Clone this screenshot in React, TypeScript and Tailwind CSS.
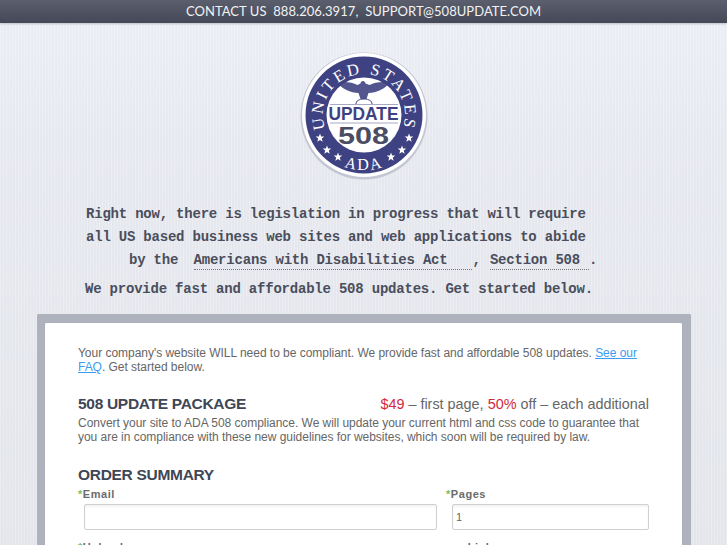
import React from 'react';

const NAVY = '#3f4282';

const starPoints = (cx: number, cy: number, r: number) => {
  const pts: string[] = [];
  for (let i = 0; i < 10; i++) {
    const rad = i % 2 === 0 ? r : r * 0.42;
    const a = (Math.PI / 5) * i - Math.PI / 2;
    pts.push(`${cx + rad * Math.cos(a)},${cy + rad * Math.sin(a)}`);
  }
  return pts.join(' ');
};

const STARS: [number, number][] = [
  [21, 88], [28, 100], [39, 107], [92, 107], [103, 100], [110, 88],
];

const Seal = () => (
  <svg width="130" height="130" viewBox="0 0 130 130" className="block">
    <defs>
      <path id="sealTop" d="M 33.6 91.400 A 41 41 0 1 1 96.400 91.400" />
      <path id="sealBottom" d="M 20 97 A 55 55 0 0 0 110 97" />
    </defs>
    <circle cx="65" cy="66" r="63.5" fill="#c4c6d3" />
    <circle cx="65" cy="65" r="62" fill="#ffffff" />
    <circle cx="65" cy="65" r="58.5" fill={NAVY} />
    <circle cx="65" cy="65" r="37.5" fill="#ffffff" />
    <text fontFamily="'Liberation Serif', serif" fontSize="16.5" fill="#ffffff" letterSpacing="2.6" textAnchor="middle">
      <textPath href="#sealTop" startOffset="50%">UNITED STATES</textPath>
    </text>
    <text fontFamily="'Liberation Serif', serif" fontSize="16" fill="#ffffff" letterSpacing="2" textAnchor="middle">
      <textPath href="#sealBottom" startOffset="50%">ADA</textPath>
    </text>
    {STARS.map(([x, y]) => (
      <polygon key={x} points={starPoints(x, y, 4.5)} fill="#ffffff" />
    ))}
    {/* eagle */}
    <path d="M64 31c-1.500 0-2.500 1-2.500 2.500l-3 1.500c-5-2.500-12-4-20-2.500 2 3 5 5.500 9 7.500 4 2 8 3 12 3l2 6h6l2-6c4 0 8-1 12-3 4-2 7-4.500 9-7.500-8-1.500-15 0-20 2.500l-4-1.500c0-1-1-2.500-2.500-2.500z" fill={NAVY} opacity="0.9" />
    <path d="M57 54c0-3 3-5 8-5s8 2 8 5" fill="none" stroke={NAVY} strokeWidth="1" />
    <path d="M31 54.500h68M31 73h68" stroke="#a7a9c4" strokeWidth="1" />
    <text x="64.500" y="70" textAnchor="middle" textLength="70" lengthAdjust="spacingAndGlyphs" fontFamily="'Liberation Sans', sans-serif" fontWeight="700" fontSize="18" fill={NAVY}>UPDATE</text>
    <text x="64.500" y="94" textAnchor="middle" textLength="51" lengthAdjust="spacingAndGlyphs" fontFamily="'Liberation Sans', sans-serif" fontWeight="700" fontSize="24" fill="#4a4d63">508</text>
  </svg>
);

const FieldLabel = ({ children, required = true }: { children: React.ReactNode; required?: boolean }) => (
  <label className="block text-[11px] leading-[14px] font-bold tracking-[0.55px] text-[#6b6b6b]">
    {required && <span className="text-[#86b95a]">*</span>}
    {children}
  </label>
);

const inputClass =
  'block h-[26px] bg-white border border-[#cfd0d3] rounded-[2px] shadow-[inset_0_2px_2px_rgba(0,0,0,0.05)] px-[3px] text-[11px] text-[#666] outline-none';

export default function App() {
  return (
    <div className="h-[545px] overflow-hidden bg-[linear-gradient(180deg,#eff1f8_0px,#e9ebf1_150px,#e6e8ed_545px)] font-['Liberation_Sans',sans-serif]">
      <div className="h-full bg-[repeating-linear-gradient(90deg,rgba(255,255,255,0.14)_0px,rgba(255,255,255,0.14)_1px,rgba(120,125,150,0.025)_1px,rgba(120,125,150,0.025)_3px)]">
        <div className="h-[23px] bg-[linear-gradient(180deg,#5a5e6d,#454957)] text-center font-['Lato',sans-serif] text-[13px] leading-[23px] tracking-[0.05px] text-[#f1f2f3] shadow-[0_1px_2px_rgba(0,0,0,0.2)]">
          CONTACT US&nbsp; 888.206.3917,&nbsp; SUPPORT@508UPDATE.COM
        </div>

        <div className="flex justify-center pl-[1px] pt-[27px]">
          <Seal />
        </div>

        <div className="mt-[23px] font-['Liberation_Mono',monospace] text-[14px] font-bold leading-[23px] tracking-[-0.21px] text-[#4a4e5c] whitespace-pre">
          <div className="pl-[86px]">Right now, there is legislation in progress that will require</div>
          <div className="pl-[86px]">all US based business web sites and web applications to abide</div>
          <div className="pl-[129px]">
            by the{'  '}
            <span className="-ml-[1px] border-b border-dotted border-[#777] pr-[25px] pb-[1px]">Americans with Disabilities Act</span>
            {', '}
            <span className="ml-[1px] border-b border-dotted border-[#777] pr-[9px] pb-[1px]">Section 508</span>
            {'.'}
          </div>
          <div className="mt-[6px] pl-[85px]">We provide fast and affordable 508 updates. Get started below.</div>
        </div>

        <div className="mx-[37px] mt-[13px] w-[654px] h-[400px] rounded-t-[2px] border-l-[8px] border-r-[9px] border-t-[9px] border-[#aeb2bc]">
          <div className="h-full rounded-t-[2px] bg-white pl-[33px] pr-[33px] pt-[23px] shadow-[0_0_1px_rgba(0,0,0,0.2)]">
            <p className="text-[12px] leading-[14px] tracking-[-0.03px] text-[#666]">
              Your company's website WILL need to be compliant. We provide fast and affordable 508 updates.{' '}
              <a href="#" className="text-[#3b9bf0] underline">See our FAQ</a>. Get started below.
            </p>

            <div className="mt-[20px] flex items-baseline justify-between">
              <h2 className="text-[15.5px] leading-[20px] font-bold tracking-[-0.3px] text-[#3f4656]">508 UPDATE PACKAGE</h2>
              <div className="text-[14.4px] leading-[20px] text-[#666]">
                <span className="text-[#d4293a]">$49</span> – first page, <span className="text-[#d4293a]">50%</span> off – each additional
              </div>
            </div>
            <p className="mt-[2px] text-[12px] leading-[14px] tracking-[-0.03px] text-[#666]">
              Convert your site to ADA 508 compliance. We will update your current html and css code to guarantee that you are in compliance with these new guidelines for websites, which soon will be required by law.
            </p>

            <h2 className="mt-[21px] text-[15.5px] leading-[20px] font-bold tracking-[-0.3px] text-[#3f4656]">ORDER SUMMARY</h2>
            <div className="mt-[2px] grid grid-cols-[368px_203px]">
              <div>
                <FieldLabel>Email</FieldLabel>
                <input className={`${inputClass} ml-[6px] mt-[3px] w-[353px]`} />
              </div>
              <div>
                <FieldLabel>Pages</FieldLabel>
                <input className={`${inputClass} ml-[6px] mt-[3px] w-[197px]`} defaultValue="1" />
              </div>
              <div className="mt-[10px]">
                <FieldLabel>Upload</FieldLabel>
              </div>
              <div className="mt-[10px] pl-[6px]">
                <FieldLabel required={false}>or Link</FieldLabel>
              </div>
            </div>
          </div>
        </div>
      </div>
    </div>
  );
}
